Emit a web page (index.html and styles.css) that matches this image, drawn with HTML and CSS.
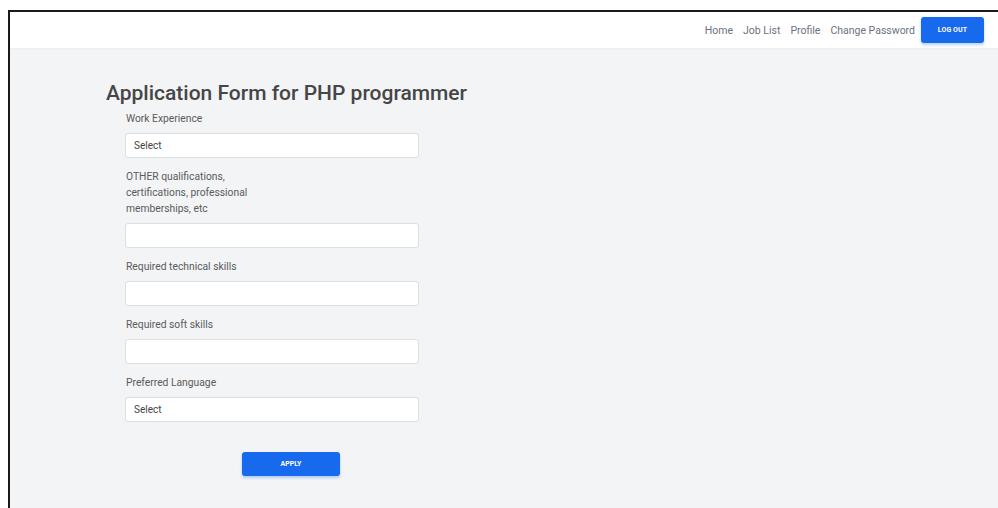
FILE: index.html
```html
<!DOCTYPE html>
<html lang="en">
<head>
<meta charset="utf-8">
<title>Application Form</title>
<link rel="stylesheet" href="styles.css">
</head>
<body>
<div class="frame">
  <header class="topbar">
    <nav class="nav">
      <a href="#" class="nav-link">Home</a>
      <a href="#" class="nav-link">Job List</a>
      <a href="#" class="nav-link">Profile</a>
      <a href="#" class="nav-link">Change Password</a>
      <button class="btn btn-logout" type="button">LOG OUT</button>
    </nav>
  </header>
  <main class="content">
    <h1 class="title">Application Form for PHP programmer</h1>
    <form class="form">
      <div class="field">
        <label class="label">Work Experience</label>
        <div class="control select">Select</div>
      </div>
      <div class="field">
        <label class="label label-wrap">OTHER qualifications, certifications, professional memberships, etc</label>
        <div class="control"></div>
      </div>
      <div class="field">
        <label class="label">Required technical skills</label>
        <div class="control"></div>
      </div>
      <div class="field">
        <label class="label">Required soft skills</label>
        <div class="control"></div>
      </div>
      <div class="field">
        <label class="label">Preferred Language</label>
        <div class="control select">Select</div>
      </div>
      <div class="actions">
        <button class="btn btn-apply" type="button">APPLY</button>
      </div>
    </form>
  </main>
</div>
</body>
</html>
```
FILE: styles.css
```css
html, body {
  margin: 0;
  padding: 0;
  background: #ffffff;
  font-family: Roboto, "Liberation Sans", Arial, sans-serif;
}

.frame {
  margin: 10px 0 0 8px;
  border-top: 2px solid #1a1a1a;
  border-left: 2px solid #1a1a1a;
  height: 496px;
  background: #f3f4f6;
  display: flex;
  flex-direction: column;
}

.topbar {
  background: #ffffff;
  height: 36px;
  flex-shrink: 0;
  display: flex;
  justify-content: flex-end;
  align-items: center;
  padding-right: 14px;
  box-shadow: 0 1px 2px rgba(0, 0, 0, 0.04);
}

.nav {
  display: flex;
  align-items: center;
  gap: 10px;
}

.nav-link {
  font-size: 10.5px;
  color: #6b7280;
  text-decoration: none;
}

.btn {
  border: none;
  background: #1769ee;
  color: #ffffff;
  font-family: inherit;
  font-weight: 700;
  border-radius: 3px;
  box-shadow: 0 2px 3px rgba(23, 105, 238, 0.3);
  cursor: pointer;
}

.btn-logout {
  width: 63px;
  height: 26px;
  font-size: 7px;
  margin-left: -4px;
  letter-spacing: 0.1px;
}

.content {
  padding: 31px 0 0 96px;
}

.title {
  margin: 0;
  font-size: 21px;
  font-weight: 500;
  color: #464646;
  line-height: 28px;
}

.form {
  margin-top: 4px;
  padding-left: 19px;
  width: 294px;
  display: flex;
  flex-direction: column;
}

.field {
  display: flex;
  flex-direction: column;
  margin-bottom: 11px;
}

.label {
  font-size: 10.3px;
  color: #5a5a5a;
  line-height: 16px;
  margin: 0 0 6px 1px;
}

.label-wrap {
  width: 160px;
}

.control {
  height: 25px;
  background: #ffffff;
  border: 1px solid #dcdfe4;
  border-radius: 3px;
  box-sizing: border-box;
  font-size: 10px;
  color: #444444;
  padding-left: 8px;
  line-height: 23px;
}

.actions {
  display: flex;
  padding: 19px 0 0 117px;
}

.btn-apply {
  width: 98px;
  height: 24px;
  font-size: 7px;
}
```
